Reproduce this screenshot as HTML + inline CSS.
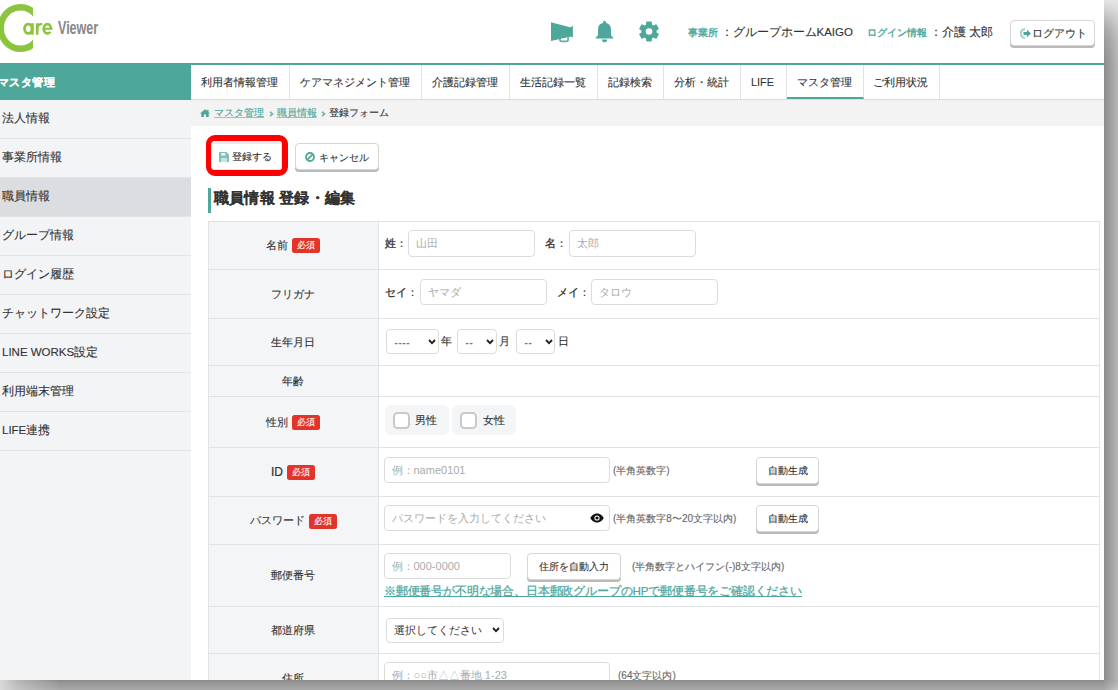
<!DOCTYPE html>
<html lang="ja"><head><meta charset="utf-8">
<style>
*{box-sizing:border-box;margin:0;padding:0}
html,body{width:1118px;height:690px;overflow:hidden}
body{font-family:"Liberation Sans",sans-serif;color:#333;background:#a0a0a0;position:relative}
#frame *{-webkit-text-stroke:0.12px currentColor}
#frame .inp,#frame .logo{-webkit-text-stroke:0}
#shr{position:absolute;left:1104px;top:0;width:14px;height:680px;background:linear-gradient(to right,#8b8b8b,#9c9c9c 40%,#b6b6b6)}
#shr2{position:absolute;left:1104px;top:0;width:14px;height:64px;background:linear-gradient(to bottom,rgba(232,232,232,0.97),rgba(232,232,232,0.74) 10px,rgba(232,232,232,0.48) 20px,rgba(232,232,232,0.28) 30px,rgba(232,232,232,0.15) 40px,rgba(232,232,232,0))}
#shb{position:absolute;left:0;top:680px;width:1104px;height:10px;background:linear-gradient(to bottom,#8c8c8c,#9a9a9a 40%,#a8a8a8)}
#shb2{position:absolute;left:0;top:680px;width:60px;height:10px;background:linear-gradient(to right,rgba(220,220,220,0.95),rgba(220,220,220,0.5) 18px,rgba(220,220,220,0))}
#shc{position:absolute;left:1104px;top:680px;width:14px;height:10px;background:linear-gradient(135deg,#959595,#b0b0b0 60%,#c8c8c8)}
#frame{position:absolute;left:0;top:0;width:1104px;height:680px;background:#fff;overflow:hidden}
.abs{position:absolute}
#topline{left:0;top:63px;width:1104px;height:2px;background:#4da79b}
#side{left:0;top:63px;width:191px;height:617px;background:#f3f4f6}
#sidehead{left:0;top:0;width:191px;height:37px;background:#4da79b;color:#fff;font-weight:bold;font-size:11.3px;line-height:39px;padding-left:0px;text-indent:-2.5px;letter-spacing:0.6px}
.sitem{position:absolute;left:0;width:191px;height:39px;border-bottom:1px solid #e2e3e5;font-size:11.5px;line-height:37px;padding-left:2px;color:#333}
#nav{left:191px;top:65px;width:913px;height:35px;background:#fff;border-bottom:1px solid #ddd}
.tab{position:absolute;top:0;height:34px;border-right:1px solid #e2e2e2;font-size:10.8px;line-height:34px;text-align:center;color:#333;padding-right:2px}
#crumb{left:191px;top:100px;width:913px;height:26px;background:#f3f3f3;font-size:10px;line-height:26px;color:#333}
.btn{position:absolute;background:#fff;border:1px solid #d6d6d6;border-radius:4px;box-shadow:0 2px 0 #b9b9b9;font-size:10px;color:#333;text-align:center}
.row{position:absolute;left:0;width:890px;border-bottom:1px solid #e2e3e5}
.lab{position:absolute;left:0;top:0;width:171px;height:100%;background:#f4f5f7;border-right:1px solid #e2e3e5;font-size:11.4px;text-align:center;display:flex;align-items:center;justify-content:center}
.req{display:inline-block;background:#e3342b;color:#fff;font-size:9px;line-height:15px;height:15px;padding:0 5px;border-radius:2.5px;margin-left:4px;position:relative;top:0.5px}
.inp{position:absolute;background:#fff;border:1px solid #dcdcdc;border-radius:4px;font-size:11px;color:#aaa;padding-left:6.5px}
.t{position:absolute;white-space:nowrap}
</style></head><body>
<div id="shr"></div><div id="shr2"></div><div id="shb"></div><div id="shb2"></div><div id="shc"></div>
<div id="frame">
  <!-- header -->
  <svg class="abs" style="left:0;top:0" width="40" height="60" viewBox="0 0 40 60">
    <defs><clipPath id="cc"><rect x="-5" y="0" width="37.9" height="60"/></clipPath></defs>
    <ellipse cx="20.5" cy="28" rx="19.8" ry="20.8" fill="none" stroke="#8cc43e" stroke-width="6.4" clip-path="url(#cc)"/>
  </svg>
  <svg class="abs" style="left:0;top:0" width="60" height="50" viewBox="0 0 60 50">
    <g fill="none" stroke="#8cc43e">
      <ellipse cx="28.3" cy="28.75" rx="3.75" ry="4.6" stroke-width="2.8"/>
      <ellipse cx="47.35" cy="28.75" rx="3.6" ry="4.6" stroke-width="2.8"/>
      <path d="M37.2 29 C37.2 25 39 24.1 42.3 24.1" stroke-width="2.5"/>
    </g>
    <g fill="#8cc43e">
      <rect x="31" y="23.2" width="2.7" height="11.5"/>
      <rect x="35.9" y="23.2" width="2.6" height="11.5"/>
      <rect x="44" y="27.7" width="8.3" height="2.1"/>
    </g>
    <rect x="49.3" y="29.8" width="4" height="2.1" fill="#fff"/>
  </svg>
  <div class="t logo" style="left:58px;top:14px;font-size:19px;line-height:28px;font-weight:bold;color:#878787;transform:scaleX(0.66);transform-origin:0 0">Viewer</div>
  <!-- icons -->
  <svg class="abs" style="left:549px;top:20px" width="26" height="24" viewBox="0 0 26 24">
    <path d="M2 2.2 L22 7.4 L22 16.6 L2 21.1 Z" fill="#4da79b"/>
    <path d="M21.5 7.6 L23.9 5.4 L23.9 17.6 L21.5 16.5 Z" fill="#4da79b"/>
    <path d="M10.9 17.6 V19.6 Q10.9 21.4 12.7 21.4 H17.3 Q19.1 21.4 19.1 19.6 V16.2" fill="none" stroke="#5fb0a5" stroke-width="1.7"/>
  </svg>
  <svg class="abs" style="left:594px;top:20px" width="21" height="23" viewBox="0 0 21 23">
    <circle cx="10.5" cy="2.3" r="1.5" fill="#4da79b"/>
    <path d="M10.5 3.1 C6 3.1 4.2 5.6 4 9.6 L4 14.3 C4 16 2.6 16.9 1.7 17.6 L1.7 18.5 L19.3 18.5 L19.3 17.6 C18.4 16.9 17 16 17 14.3 L17 9.6 C16.8 5.6 15 3.1 10.5 3.1 Z" fill="#4da79b"/>
    <path d="M8 19.4 H13.2 Q13.2 22.2 10.6 22.2 Q8 22.2 8 19.4 Z" fill="#4da79b"/>
  </svg>
  <svg class="abs" style="left:638px;top:20px" width="22" height="23" viewBox="-11 -11.5 22 23">
    <g fill="#4da79b">
      <circle r="7.6"/>
      <rect x="-2.9" y="-10" width="5.8" height="20" rx="1"/>
      <rect x="-2.9" y="-10" width="5.8" height="20" rx="1" transform="rotate(60)"/>
      <rect x="-2.9" y="-10" width="5.8" height="20" rx="1" transform="rotate(120)"/>
    </g>
    <circle r="3.3" fill="#fff"/>
  </svg>
  <div class="t" style="left:688px;top:26px;font-size:10px;color:#4da79b;-webkit-text-stroke:0.35px #4da79b">事業所</div>
  <div class="t" style="left:720.5px;top:25px;font-size:11.5px;color:#333">：グループホームKAIGO</div>
  <div class="t" style="left:867px;top:26px;font-size:10px;color:#4da79b;-webkit-text-stroke:0.35px #4da79b">ログイン情報</div>
  <div class="t" style="left:930px;top:25px;font-size:11.5px;color:#333">：介護 太郎</div>
  <div class="btn" style="left:1010px;top:20px;width:85px;height:26px;line-height:24px;font-size:10px;text-align:left;padding-left:10px">
    <svg style="position:absolute;left:8.5px;top:7px" width="12" height="11" viewBox="0 0 12 11"><path d="M5 1.2 A4.3 4.3 0 1 0 5 9.8" fill="none" stroke="#a5d3cd" stroke-width="2.2"/><path d="M3.5 4 H7 V1.8 L11 5.5 L7 9.2 V7 H3.5 Z" fill="#4da79b"/></svg>
    <span style="position:absolute;left:20.5px;top:-0.5px;font-size:10.5px">ログアウト</span>
  </div>
  <div id="topline" class="abs"></div>
  <div id="side" class="abs">
    <div id="sidehead" class="abs">マスタ管理</div>
    <div class="sitem" style="top:37px">法人情報</div>
    <div class="sitem" style="top:76px">事業所情報</div>
    <div class="sitem" style="top:115px;background:#dcdde0">職員情報</div>
    <div class="sitem" style="top:154px">グループ情報</div>
    <div class="sitem" style="top:193px">ログイン履歴</div>
    <div class="sitem" style="top:232px">チャットワーク設定</div>
    <div class="sitem" style="top:271px">LINE WORKS設定</div>
    <div class="sitem" style="top:310px">利用端末管理</div>
    <div class="sitem" style="top:349px">LIFE連携</div>
  </div>
  <div id="nav" class="abs">
    <div class="tab" style="left:0;width:99px">利用者情報管理</div>
    <div class="tab" style="left:99px;width:132px">ケアマネジメント管理</div>
    <div class="tab" style="left:231px;width:88px">介護記録管理</div>
    <div class="tab" style="left:319px;width:88px">生活記録一覧</div>
    <div class="tab" style="left:407px;width:66px">記録検索</div>
    <div class="tab" style="left:473px;width:77px">分析・統計</div>
    <div class="tab" style="left:550px;width:46px">LIFE</div>
    <div class="tab" style="left:596px;width:77px;border-bottom:2px solid #4da79b">マスタ管理</div>
    <div class="tab" style="left:673px;width:76px">ご利用状況</div>
  </div>
  <div id="crumb" class="abs">
    <svg style="position:absolute;left:9px;top:9px" width="10" height="8" viewBox="0 0 10 8"><path d="M5 0.3 L10 4.5 L8.7 4.5 L8.7 8 L6 8 L6 5.6 L4 5.6 L4 8 L1.3 8 L1.3 4.5 L0 4.5 Z" fill="#4da79b"/><rect x="7" y="0.8" width="1.5" height="2.5" fill="#4da79b"/></svg>
    <span class="t" style="left:23px;top:0;color:#4da79b;text-decoration:underline;text-decoration-color:#8cc9c1">マスタ管理</span>
    <svg style="position:absolute;left:77.5px;top:10.5px" width="5" height="6" viewBox="0 0 5 6"><path d="M1 0.8 L3.6 3 L1 5.2" fill="none" stroke="#6fb3aa" stroke-width="1.6"/></svg>
    <span class="t" style="left:85.5px;top:0;color:#4da79b;text-decoration:underline;text-decoration-color:#8cc9c1">職員情報</span>
    <svg style="position:absolute;left:129.5px;top:10.5px" width="5" height="6" viewBox="0 0 5 6"><path d="M1 0.8 L3.6 3 L1 5.2" fill="none" stroke="#6fb3aa" stroke-width="1.6"/></svg>
    <span class="t" style="left:138px;top:0;color:#333">登録フォーム</span>
  </div>
  <div class="abs" style="left:205.5px;top:135px;width:82px;height:41px;border:6px solid #f00;border-radius:9px"></div>
  <div class="btn" style="left:211px;top:141px;width:71px;height:29px;border-color:#e8e8e8;border-top:3px solid #ececec;box-shadow:none"></div>
  <svg class="abs" style="left:219px;top:152px" width="10" height="10" viewBox="0 0 10 10"><path d="M0 0 H7.5 L10 2.5 V10 H0 Z" fill="#7dc1b9"/><rect x="2.2" y="1" width="4.2" height="2.6" fill="#e8f4f2"/><path d="M2 6 H8 V10 H2 Z" fill="#c5e4e0"/></svg>
  <div class="t" style="left:231.5px;top:150px;font-size:10px;color:#333">登録する</div>
  <div class="btn" style="left:295px;top:143px;width:84px;height:27px"></div>
  <svg class="abs" style="left:305px;top:152px" width="10" height="10" viewBox="0 0 10 10"><circle cx="5" cy="5" r="4" fill="none" stroke="#4da79b" stroke-width="1.8"/><path d="M2.3 7.7 L7.7 2.3" stroke="#4da79b" stroke-width="1.8"/></svg>
  <div class="t" style="left:318.5px;top:151px;font-size:10px;color:#333">キャンセル</div>
  <div class="abs" style="left:208px;top:188px;width:3px;height:25px;background:#4da79b"></div>
  <div class="t" style="left:214px;top:189px;font-size:15px;font-weight:bold;color:#333;letter-spacing:0.2px">職員情報 登録・編集</div>
  <div class="row" style="left:208px;top:221px;width:892px;height:49px"><div class="lab">名前<span class=req>必須</span></div></div>
  <div class="row" style="left:208px;top:270px;width:892px;height:49px"><div class="lab">フリガナ</div></div>
  <div class="row" style="left:208px;top:319px;width:892px;height:47px"><div class="lab">生年月日</div></div>
  <div class="row" style="left:208px;top:366px;width:892px;height:31px"><div class="lab">年齢</div></div>
  <div class="row" style="left:208px;top:397px;width:892px;height:51px"><div class="lab">性別<span class=req>必須</span></div></div>
  <div class="row" style="left:208px;top:448px;width:892px;height:49px"><div class="lab"><span style="font-size:12px;-webkit-text-stroke:0.2px #333">ID</span><span class=req style="top:0">必須</span></div></div>
  <div class="row" style="left:208px;top:497px;width:892px;height:48px"><div class="lab">パスワード<span class=req>必須</span></div></div>
  <div class="row" style="left:208px;top:545px;width:892px;height:62px"><div class="lab">郵便番号</div></div>
  <div class="row" style="left:208px;top:607px;width:892px;height:47px"><div class="lab">都道府県</div></div>
  <div class="row" style="left:208px;top:654px;width:892px;height:49px"><div class="lab">住所</div></div>
  <div class="abs" style="left:208px;top:221px;width:892px;height:470px;border-left:1px solid #e2e3e5;border-right:1px solid #e2e3e5;border-top:1px solid #e2e3e5"></div>

  <!-- form fields -->
  <div class="t" style="left:385px;top:236px;font-size:11px;color:#333"><span style="-webkit-text-stroke:0.3px #333">姓</span>：</div>
  <div class="inp" style="left:408px;top:230px;width:127px;height:27px;line-height:25px">山田</div>
  <div class="t" style="left:545px;top:236px;font-size:11px;color:#333"><span style="-webkit-text-stroke:0.3px #333">名</span>：</div>
  <div class="inp" style="left:569px;top:230px;width:127px;height:27px;line-height:25px">太郎</div>
  <div class="t" style="left:385px;top:285px;font-size:11px;color:#333"><span style="-webkit-text-stroke:0.3px #333">セイ</span>：</div>
  <div class="inp" style="left:420px;top:279px;width:127px;height:26px;line-height:24px">ヤマダ</div>
  <div class="t" style="left:557px;top:285px;font-size:11px;color:#333"><span style="-webkit-text-stroke:0.3px #333">メイ</span>：</div>
  <div class="inp" style="left:591px;top:279px;width:127px;height:26px;line-height:24px">タロウ</div>

  <div class="inp" style="left:386px;top:329px;width:53px;height:25px;line-height:25px;color:#777;font-size:10px;letter-spacing:0.6px;font-weight:bold;padding-left:7.5px">----</div><svg class="abs" style="left:428px;top:339px" width="8" height="6" viewBox="0 0 8 6"><path d="M1 1 L4 4.2 L7 1" fill="none" stroke="#222" stroke-width="1.9"/></svg>
  <div class="t" style="left:441px;top:333.5px;font-size:11px;color:#333">年</div>
  <div class="inp" style="left:457px;top:329px;width:40px;height:25px;line-height:25px;color:#777;font-size:10px;letter-spacing:0.6px;font-weight:bold;padding-left:7.5px">--</div><svg class="abs" style="left:486px;top:339px" width="8" height="6" viewBox="0 0 8 6"><path d="M1 1 L4 4.2 L7 1" fill="none" stroke="#222" stroke-width="1.9"/></svg>
  <div class="t" style="left:499px;top:333.5px;font-size:11px;color:#333">月</div>
  <div class="inp" style="left:516px;top:329px;width:39px;height:25px;line-height:25px;color:#777;font-size:10px;letter-spacing:0.6px;font-weight:bold;padding-left:7.5px">--</div><svg class="abs" style="left:545px;top:339px" width="8" height="6" viewBox="0 0 8 6"><path d="M1 1 L4 4.2 L7 1" fill="none" stroke="#222" stroke-width="1.9"/></svg>
  <div class="t" style="left:557.5px;top:333.5px;font-size:11px;color:#333">日</div>

  <div class="abs" style="left:385px;top:405px;width:64px;height:30px;background:#f4f5f7;border-radius:6px"></div>
  <div class="abs" style="left:393px;top:412px;width:17px;height:17px;border:2px solid #c9c9c9;border-radius:4.5px;background:#fff"></div>
  <div class="t" style="left:415px;top:413px;font-size:11px;color:#333">男性</div>
  <div class="abs" style="left:452px;top:405px;width:64px;height:30px;background:#f4f5f7;border-radius:6px"></div>
  <div class="abs" style="left:460px;top:412px;width:17px;height:17px;border:2px solid #c9c9c9;border-radius:4.5px;background:#fff"></div>
  <div class="t" style="left:483px;top:413px;font-size:11px;color:#333">女性</div>

  <div class="inp" style="left:384px;top:457px;width:226px;height:26px;line-height:24px">例：name0101</div>
  <div class="t" style="left:613px;top:464px;font-size:10px;color:#666">(半角英数字)</div>
  <div class="btn" style="left:756px;top:457px;width:63px;height:27px;line-height:26px">自動生成</div>

  <div class="inp" style="left:384px;top:505px;width:226px;height:26px;line-height:24px;font-size:10.7px;padding-left:7px">パスワードを入力してください</div>
  <svg class="abs" style="left:590px;top:513px" width="14" height="10" viewBox="0 0 14 10"><path d="M7 0.5 C3.5 0.5 1.2 3 0.3 5 C1.2 7 3.5 9.5 7 9.5 C10.5 9.5 12.8 7 13.7 5 C12.8 3 10.5 0.5 7 0.5 Z" fill="#111"/><circle cx="7" cy="5" r="2.6" fill="#fff"/><circle cx="7" cy="5" r="1.6" fill="#111"/></svg>
  <div class="t" style="left:613px;top:512px;font-size:10px;color:#666">(半角英数字8〜20文字以内)</div>
  <div class="btn" style="left:756px;top:505px;width:63px;height:27px;line-height:26px">自動生成</div>

  <div class="inp" style="left:384px;top:553px;width:127px;height:26px;line-height:24px">例：000-0000</div>
  <div class="btn" style="left:527px;top:553px;width:94px;height:27px;line-height:26px">住所を自動入力</div>
  <div class="t" style="left:632px;top:560px;font-size:10px;color:#666">(半角数字とハイフン(-)8文字以内)</div>
  <div class="t" style="left:384px;top:584px;font-size:11.6px;letter-spacing:-0.17px;color:#4da79b;text-decoration:underline;-webkit-text-stroke:0.25px #4da79b">※郵便番号が不明な場合、日本郵政グループのHPで郵便番号をご確認ください</div>

  <div class="inp" style="left:386px;top:618px;width:118px;height:25px;line-height:23px;color:#333;font-size:11px">選択してください</div><svg class="abs" style="left:492px;top:627px" width="8" height="6" viewBox="0 0 8 6"><path d="M1 1 L4 4.2 L7 1" fill="none" stroke="#222" stroke-width="1.9"/></svg>

  <div class="inp" style="left:384px;top:662px;width:226px;height:26px;line-height:24px">例：○○市△△番地 1-23</div>
  <div class="t" style="left:618px;top:669px;font-size:10px;color:#666">(64文字以内)</div>
</div>
</body></html>
